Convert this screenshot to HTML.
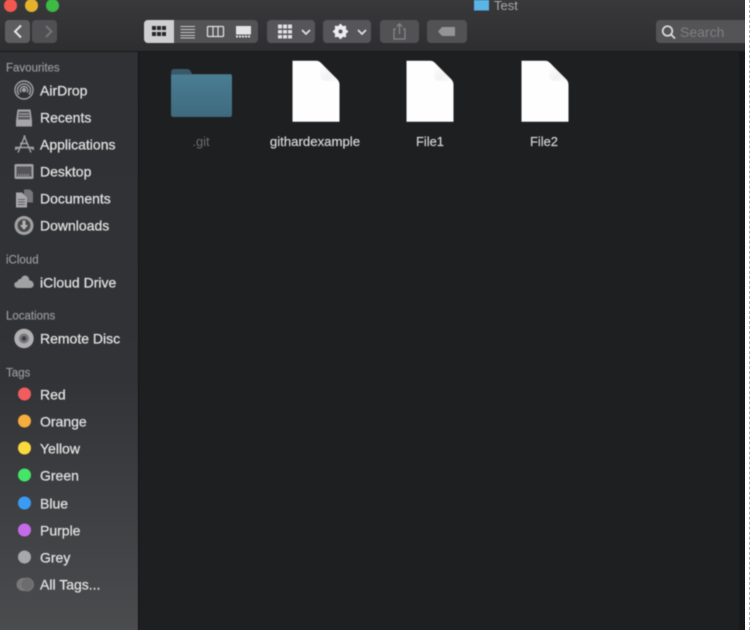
<!DOCTYPE html>
<html><head><meta charset="utf-8"><style>
html,body{margin:0;padding:0;width:754px;height:630px;overflow:hidden;background:#fff;font-family:"Liberation Sans",sans-serif}
#clip{position:absolute;left:0;top:0;width:745px;height:630px;overflow:hidden;background:#1e1f21}
#win{position:absolute;left:-6px;top:-6px;width:757px;height:642px;background:#1e1f21;filter:blur(.6px)}
#in{position:absolute;left:6px;top:6px;width:745px;height:630px}
#tb{position:absolute;left:-6px;top:-6px;width:757px;height:57px;background:linear-gradient(#3a3a3d,#39393c 10%,#2e2e31);border-bottom:1px solid #17181a}
.a{position:absolute}
.btn{position:absolute;top:26px;height:23px;background:#56565a;border-radius:4px}
.dot{position:absolute;top:5px;width:12.5px;height:12.5px;border-radius:50%}
#side{position:absolute;left:-6px;top:52px;width:144px;height:590px;background:linear-gradient(#303134 0,#323336 55%,#4c4d4f 100%);border-right:1px solid #111214}
#sc{position:absolute;left:6px;top:0;width:138px;transform:translateY(.5px)}
.h{position:absolute;left:6px;margin-top:.5px;font-size:11.5px;color:#9a9b9d;line-height:14px;white-space:nowrap;-webkit-text-stroke:.15px #9a9b9d}
.l{position:absolute;left:40px;font-size:14px;color:#e2e2e3;line-height:18px;white-space:nowrap;-webkit-text-stroke:.25px #e2e2e3}
.t{position:absolute;left:18px;width:13px;height:13px;border-radius:50%}
.f{position:absolute;font-size:12.9px;line-height:16px;text-align:center;white-space:nowrap}
svg{position:absolute;overflow:visible}
</style></head><body>
<div id="clip"><div id="win"><div id="in">
<div id="tb">
<div class="dot" style="left:10px;background:#f2584f"></div>
<div class="dot" style="left:31px;background:#e5b22c"></div>
<div class="dot" style="left:52px;background:#3dbb45"></div>

<svg style="left:479px;top:6px" width="17" height="12"><path d="M1 0H16V10.500H1Z" fill="#5bb4e6"/></svg>
<div class="a" style="left:500px;top:4px;font-size:13px;line-height:15px;color:#a9a9ab">Test</div>

<div class="btn" style="left:11px;width:25px;background:#5d5d60"></div>
<div class="btn" style="left:38px;width:25px;background:#505053"></div>
<svg style="left:11px;top:26px" width="52" height="23" fill="none" stroke-width="2"><path d="M16 5.500L10 11.500L16 17.500" stroke="#e6e6e6"/><path d="M41 6L46.500 11.500L41 17" stroke="#747477"/></svg>

<div class="btn" style="left:150px;width:114px;background:#535356"></div>
<div class="a" style="left:150px;top:26px;width:30px;height:23px;background:#cfcfd0;border-radius:4px 0 0 4px"></div>
<svg style="left:150px;top:26px" width="114" height="23">
<g fill="#26262a"><rect x="8" y="6" width="4" height="4"/><rect x="13" y="6" width="4" height="4"/><rect x="18" y="6" width="4" height="4"/><rect x="8" y="12" width="4" height="4"/><rect x="13" y="12" width="4" height="4"/><rect x="18" y="12" width="4" height="4"/></g>
<path d="M36.500 6.500H51M36.500 9.500H51M36.500 12.500H51M36.500 15.500H51M36.500 18H51" stroke="#c8c8c8" stroke-width="1"/>
<rect x="63.500" y="6.500" width="16" height="10" rx="1" fill="none" stroke="#e0e0e0" stroke-width="1.300"/><path d="M69 6.500V16.500M74 6.500V16.500" stroke="#e0e0e0" stroke-width="1.200"/>
<rect x="92" y="6" width="15" height="8.500" fill="#e4e4e4"/><path d="M92 16.500H107" stroke="#e4e4e4" stroke-width="2" stroke-dasharray="2 1"/>
</svg>

<div class="btn" style="left:273px;width:48px"></div>
<svg style="left:273px;top:26px" width="48" height="23">
<g fill="#e2e2e2"><rect x="11" y="4.500" width="4" height="4"/><rect x="16" y="4.500" width="4" height="4"/><rect x="21" y="4.500" width="4" height="4"/><rect x="11" y="10" width="4" height="3.500"/><rect x="16" y="10" width="4" height="3.500"/><rect x="21" y="10" width="4" height="3.500"/><rect x="11" y="15" width="4" height="3.500"/><rect x="16" y="15" width="4" height="3.500"/><rect x="21" y="15" width="4" height="3.500"/></g>
<path d="M35 10L39 14L43 10" fill="none" stroke="#e0e0e0" stroke-width="1.700"/>
</svg>

<div class="btn" style="left:329px;width:48px"></div>
<svg style="left:329px;top:26px" width="48" height="23">
<circle cx="17.500" cy="11.500" r="4.800" fill="none" stroke="#eee" stroke-width="2.800"/>
<path d="M17.500 4V19M10 11.500H25M12.200 6.200L22.800 16.800M22.800 6.200L12.200 16.800" stroke="#eee" stroke-width="2.200"/>
<circle cx="17.500" cy="11.500" r="2" fill="#56565a"/>
<path d="M35 10L39 14L43 10" fill="none" stroke="#e0e0e0" stroke-width="1.700"/>
</svg>

<div class="btn" style="left:386px;width:39px;background:#525255"></div>
<svg style="left:386px;top:26px" width="39" height="23" fill="none" stroke="#858587" stroke-width="1.300">
<path d="M16 9H14V19H25V9H23"/><path d="M19.500 14V4M16.800 6.500L19.500 3.800L22.200 6.500"/>
</svg>

<div class="btn" style="left:433px;width:40px;background:#525255"></div>
<svg style="left:433px;top:26px" width="40" height="23"><path d="M15 7H28V16H15L11 11.500Z" fill="#949496"/></svg>

<div class="btn" style="left:662px;width:95px;background:#545457;border-radius:4px 0 0 4px"></div>
<svg style="left:662px;top:26px" width="24" height="23" fill="none" stroke="#dedede" stroke-width="1.700"><circle cx="11.500" cy="11" r="4.800"/><path d="M15 14.500L19 18.500"/></svg>
<div class="a" style="left:686px;top:30px;font-size:14px;line-height:16px;color:#7f7f82">Search</div>
</div>

<div id="side"><div id="sc">
<div class="h" style="top:8px">Favourites</div>
<svg style="left:14px;top:28px" width="20" height="20" fill="none" stroke="#a2a2a4" stroke-width="1.400"><circle cx="10" cy="9.500" r="9"/><path d="M5 14a6.500 6.500 0 1 1 10 0"/><path d="M7 12a3.800 3.800 0 1 1 6 0"/><circle cx="10" cy="9.500" r="1.500" fill="#a2a2a4"/></svg>
<div class="l" style="top:29px">AirDrop</div>

<svg style="left:15px;top:56px" width="18" height="19"><path d="M2.500 1H15.500L17 12V18H1V12Z" fill="#a5a5a7"/><path d="M4 3H14L15 11H3Z" fill="#5a5a5c"/><path d="M4.500 5.500H13.500M4 8H14" stroke="#a5a5a7"/></svg>
<div class="l" style="top:56px">Recents</div>

<svg style="left:14px;top:82px" width="21" height="20" fill="none" stroke="#a5a5a7" stroke-width="1.400"><path d="M11 1L4 18M10 1L17 18M1 13H20M6 9H14M1 15L5 13M20 15L16 13"/></svg>
<div class="l" style="top:83px">Applications</div>

<svg style="left:14px;top:111px" width="20" height="16"><rect x="0.500" y="0.500" width="19" height="15" rx="1.500" fill="#a2a2a4"/><rect x="2.500" y="3" width="15" height="10" fill="#555557"/><path d="M4 11.500H16" stroke="#9a9a9c" stroke-width="2" stroke-dasharray="1 1"/></svg>
<div class="l" style="top:110px">Desktop</div>

<svg style="left:16px;top:137px" width="17" height="18"><path d="M8 0H14L17 3V13H8Z" fill="#77777a"/><path d="M0 3H6L11 8V18H0Z" fill="#a8a8aa"/><path d="M2 10H9M2 12.500H9M2 15H9" stroke="#606062"/></svg>
<div class="l" style="top:137px">Documents</div>

<svg style="left:14px;top:163px" width="20" height="20"><circle cx="10" cy="10" r="9.500" fill="#a2a2a4"/><circle cx="10" cy="10" r="6.500" fill="#4a4a4c"/><path d="M8.500 5H11.500V9.500H14L10 14.500L6 9.500H8.500Z" fill="#b5b5b7"/></svg>
<div class="l" style="top:164px">Downloads</div>

<div class="h" style="top:200px">iCloud</div>
<svg style="left:14px;top:222px" width="20" height="14"><path d="M4 13.500C1.500 13.500 .3 12 .3 10.300C.3 8.500 1.700 7.300 3.300 7.300C3.800 5.300 5.300 4.300 6.800 4.600C8 1.800 10 .8 11.800 1.100C14 1.500 15.300 3.400 15.300 5.800C17.800 6 19.700 8 19.700 10C19.700 12 18.300 13.500 16 13.500Z" fill="#a2a2a4"/></svg>
<div class="l" style="top:221px">iCloud Drive</div>

<div class="h" style="top:256px">Locations</div>
<svg style="left:14px;top:276px" width="20" height="20"><circle cx="10" cy="10" r="9.700" fill="#b0b0b2"/><circle cx="10" cy="10" r="5" fill="#77777a"/><circle cx="10" cy="10" r="2.200" fill="#3c3c3e"/></svg>
<div class="l" style="top:277px">Remote Disc</div>

<div class="h" style="top:313px">Tags</div>
<div class="t" style="top:335px;background:#f25c5f"></div><div class="l" style="top:333px">Red</div>
<div class="t" style="top:362px;background:#f6ad3b"></div><div class="l" style="top:360px">Orange</div>
<div class="t" style="top:389px;background:#fad93f"></div><div class="l" style="top:387px">Yellow</div>
<div class="t" style="top:416px;background:#43e668"></div><div class="l" style="top:414px">Green</div>
<div class="t" style="top:444px;background:#3a9bf5"></div><div class="l" style="top:442px">Blue</div>
<div class="t" style="top:471px;background:#c56bea"></div><div class="l" style="top:469px">Purple</div>
<div class="t" style="top:498px;background:#a8a8aa"></div><div class="l" style="top:496px">Grey</div>
<svg style="left:16px;top:525px" width="18" height="14"><circle cx="7" cy="7" r="6.500" fill="#777779"/><circle cx="11" cy="7" r="6.500" fill="#6c6c6e" stroke="#8a8a8c" stroke-width=".6"/></svg>
<div class="l" style="top:523px">All Tags...</div>
</div></div>

<svg style="left:170px;top:68px" width="63" height="50"><defs><linearGradient id="g" x1="0" y1="0" x2="0" y2="1"><stop offset="0" stop-color="#4a7d93"/><stop offset="1" stop-color="#3f6a7e"/></linearGradient><linearGradient id="c" x1="0" y1="0" x2="1" y2="1"><stop offset="0" stop-color="#fff"/><stop offset=".6" stop-color="#f2f2f3"/><stop offset="1" stop-color="#fbfbfb"/></linearGradient></defs><path d="M1 5Q1 1 4 1H17Q20 1 21 4L22 6H60Q62 6 62 8V11H1Z" fill="#38596a"/><path d="M1 8Q1 6.500 3 6.500H60Q62 6.500 62 8.500V46Q62 49 60 49H3Q1 49 1 46Z" fill="url(#g)"/></svg>
<div class="f" style="left:171px;top:134px;width:60px;color:#6e6e70">.git</div>

<svg style="left:292px;top:60px" width="48" height="63"><path d="M.500 .800H24Q27 .800 29 3L45 19Q47.500 21.500 47.500 25V61.800H.500Z" fill="#fefefe"/><path d="M29 3L46 21Q38 21 33 21Q28 20 28 15Z" fill="url(#c)"/></svg>
<div class="f" style="left:255px;top:134px;width:120px;font-size:13.2px;color:#d8d8d9;-webkit-text-stroke:.2px #d8d8d9">githardexample</div>

<svg style="left:406px;top:60px" width="48" height="63"><path d="M.500 .800H24Q27 .800 29 3L45 19Q47.500 21.500 47.500 25V61.800H.500Z" fill="#fefefe"/><path d="M29 3L46 21Q38 21 33 21Q28 20 28 15Z" fill="url(#c)"/></svg>
<div class="f" style="left:400px;top:134px;width:60px;color:#d2d2d3;-webkit-text-stroke:.2px #d2d2d3">File1</div>

<svg style="left:521px;top:60px" width="48" height="63"><path d="M.500 .800H24Q27 .800 29 3L45 19Q47.500 21.500 47.500 25V61.800H.500Z" fill="#fefefe"/><path d="M29 3L46 21Q38 21 33 21Q28 20 28 15Z" fill="url(#c)"/></svg>
<div class="f" style="left:514px;top:134px;width:60px;color:#d2d2d3;-webkit-text-stroke:.2px #d2d2d3">File2</div>

<div class="a" style="left:739px;top:52px;width:12px;height:590px;background:#17181a"></div>
</div></div></div>
<div style="position:absolute;left:749px;top:0;height:630px;border-left:1px dashed #b5b5b5"></div>
</body></html>
